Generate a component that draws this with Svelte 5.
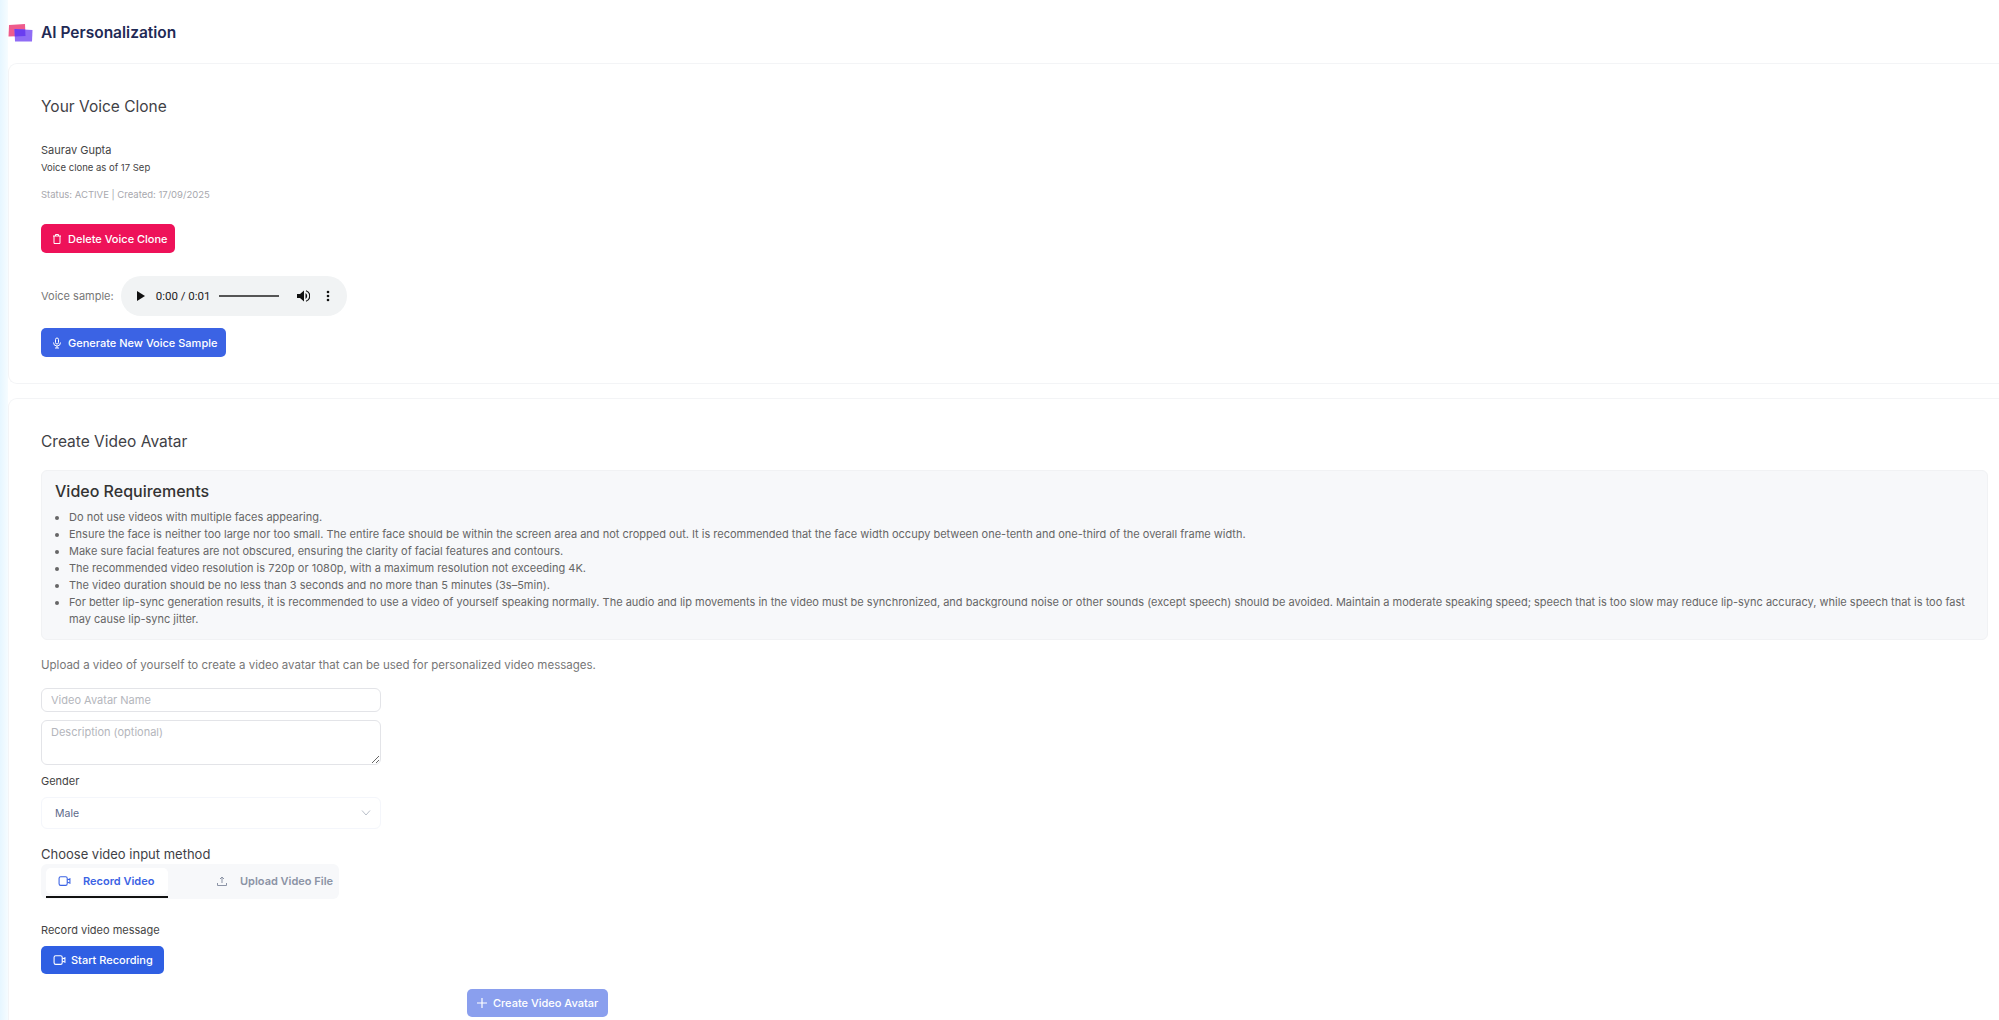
<script>
    const requirements = [
        'Do not use videos with multiple faces appearing.',
        'Ensure the face is neither too large nor too small. The entire face should be within the screen area and not cropped out. It is recommended that the face width occupy between one-tenth and one-third of the overall frame width.',
        'Make sure facial features are not obscured, ensuring the clarity of facial features and contours.',
        'The recommended video resolution is 720p or 1080p, with a maximum resolution not exceeding 4K.',
        'The video duration should be no less than 3 seconds and no more than 5 minutes (3s–5min).',
        'For better lip-sync generation results, it is recommended to use a video of yourself speaking normally. The audio and lip movements in the video must be synchronized, and background noise or other sounds (except speech) should be avoided. Maintain a moderate speaking speed; speech that is too slow may reduce lip-sync accuracy, while speech that is too fast may cause lip-sync jitter.'
    ];
</script>

<div class="page">
    <div class="strip"></div>
    <main>
        <header>
            <svg class="logo" width="26" height="20" viewBox="0 0 26 20">
                <path d="M1 2 L17 1 L17.500 13 L0.500 13.500 Z" fill="#ee5b8c" />
                <path d="M6.500 6 L24.500 7 L24 18.500 L7 18.500 Z" fill="#8f6cf5" />
                <path d="M6.500 6 L17.200 6.500 L17.500 13 L6.800 13.400 Z" fill="#6a3df0" />
            </svg>
            <h1>AI Personalization</h1>
        </header>

        <section class="card first">
            <h2>Your Voice Clone</h2>
            <p class="name">Saurav Gupta</p>
            <p class="as-of">Voice clone as of 17 Sep</p>
            <p class="status">Status: ACTIVE | Created: 17/09/2025</p>
            <button class="btn danger">
                <svg width="12" height="12" viewBox="0 0 24 24" fill="none" stroke="currentColor" stroke-width="2"><path d="M4 6h16M9 6V3h6v3M6 6v15h12V6" /></svg>
                Delete Voice Clone
            </button>
            <div class="sample">
                <span>Voice sample:</span>
                <div class="player">
                    <svg class="play" width="8" height="10" viewBox="0 0 8 10"><path d="M0 0 L8 5 L0 10 Z" fill="#111" /></svg>
                    <span class="time">0:00 / 0:01</span>
                    <div class="track"></div>
                    <svg class="vol" width="13" height="12" viewBox="0 0 13 12"><path d="M0 4 H3 L7 0.500 V11.500 L3 8 H0 Z" fill="#111" /><path d="M8.500 3 A3.500 3.500 0 0 1 8.500 9 Z" fill="#111" /><path d="M9 0.800 A5.500 5.500 0 0 1 9 11.200" fill="none" stroke="#111" stroke-width="1.200" /></svg>
                    <svg class="dots" width="4" height="12" viewBox="0 0 4 12"><circle cx="2" cy="2" r="1.300" fill="#111" /><circle cx="2" cy="6" r="1.300" fill="#111" /><circle cx="2" cy="10" r="1.300" fill="#111" /></svg>
                </div>
            </div>
            <button class="btn primary generate">
                <svg width="12" height="12" viewBox="0 0 24 24" fill="none" stroke="currentColor" stroke-width="2"><rect x="9" y="2" width="6" height="12" rx="3" /><path d="M5 11a7 7 0 0 0 14 0M12 18v4M8 22h8" /></svg>
                Generate New Voice Sample
            </button>
        </section>

        <section class="card second">
            <h2>Create Video Avatar</h2>
            <div class="requirements">
                <h3>Video Requirements</h3>
                <ul>
                    {#each requirements as item}
                        <li>{item}</li>
                    {/each}
                </ul>
            </div>
            <p class="intro">Upload a video of yourself to create a video avatar that can be used for personalized video messages.</p>

            <div class="form">
                <input type="text" placeholder="Video Avatar Name" />
                <textarea placeholder="Description (optional)"></textarea>
                <label for="gender">Gender</label>
                <div id="gender" class="select">
                    <span>Male</span>
                    <svg width="10" height="6" viewBox="0 0 10 6" fill="none" stroke="#b9bfca" stroke-width="1"><path d="M1 0.500 L5 5 L9 0.500" /></svg>
                </div>
            </div>

            <p class="method">Choose video input method</p>
            <div class="tabs">
                <div class="tab active">
                    <svg width="13" height="12" viewBox="0 0 24 22" fill="none" stroke="currentColor" stroke-width="2"><rect x="2" y="3" width="15" height="16" rx="3" /><path d="M17 9l5-2v8l-5-2" /></svg>
                    Record Video
                </div>
                <div class="tab">
                    <svg width="12" height="12" viewBox="0 0 24 24" fill="none" stroke="currentColor" stroke-width="2"><path d="M3 16v5h18v-5M12 16V4M8 8l4-4 4 4" /></svg>
                    Upload Video File
                </div>
            </div>

            <p class="record-label">Record video message</p>
            <button class="btn primary start">
                <svg width="13" height="12" viewBox="0 0 24 22" fill="none" stroke="currentColor" stroke-width="2"><rect x="2" y="3" width="15" height="16" rx="3" /><path d="M17 9l5-2v8l-5-2" /></svg>
                Start Recording
            </button>
            <div class="submit-row">
                <button class="btn create">
                    <svg width="12" height="12" viewBox="0 0 12 12" fill="none" stroke="currentColor" stroke-width="1.200"><path d="M6 1v10M1 6h10" /></svg>
                    Create Video Avatar
                </button>
            </div>
        </section>
    </main>
</div>

<style>
    :global(body) {
        background: #fff;
        overflow: hidden;
    }

    * {
        box-sizing: border-box;
    }

    .page {
        display: flex;
        height: 1020px;
        overflow: hidden;
        font-family: Inter, "Open Sans", sans-serif;
        color: #444;
    }

    .strip {
        width: 8px;
        flex-shrink: 0;
        background: linear-gradient(90deg, #e6f6ff, #f6fcff);
    }

    main {
        flex: 1;
        min-width: 0;
    }

    header {
        display: flex;
        align-items: center;
        height: 63px;
        padding-top: 2px;
    }

    .logo {
        margin-right: 7px;
    }

    h1 {
        margin: 0;
        font-size: 15.5px;
        font-weight: 600;
        color: #1f2a55;
    }

    .card {
        background: #fff;
        border: 1px solid #f3f4f6;
        border-right: 0;
        border-radius: 9px 0 0 9px;
        padding-left: 32px;
    }

    .first {
        height: 321px;
        padding-top: 33px;
    }

    .second {
        height: 640px;
        margin-top: 14px;
        padding-top: 33px;
    }

    h2 {
        margin: 0;
        font-size: 15.500px;
        font-weight: 400;
        line-height: 20px;
        color: #3f3f46;
    }

    p {
        margin: 0;
    }

    .name {
        margin-top: 26px;
        font-size: 11px;
        line-height: 14px;
    }

    .as-of {
        margin-top: 5px;
        font-size: 9.500px;
        line-height: 12px;
    }

    .status {
        margin-top: 15px;
        font-size: 9.500px;
        line-height: 12px;
        color: #a8a8ae;
    }

    .btn {
        display: inline-flex;
        align-items: center;
        gap: 5px;
        height: 29px;
        border: 0;
        border-radius: 5px;
        color: #fff;
        font-family: inherit;
        font-size: 11px;
        font-weight: 500;
        white-space: nowrap;
    }

    .danger {
        display: flex;
        width: 134px;
        margin-top: 23px;
        padding-left: 10px;
        background: #ee1259;
    }

    .sample {
        display: flex;
        align-items: center;
        gap: 7px;
        margin-top: 23px;
        font-size: 11px;
        color: #777;
    }

    .player {
        display: flex;
        align-items: center;
        width: 226px;
        height: 40px;
        padding-left: 16px;
        border-radius: 20px;
        background: #f1f3f4;
    }

    .time {
        margin-left: 11px;
        width: 50px;
        font-family: Roboto, sans-serif;
        font-size: 11.500px;
        color: #222;
        white-space: nowrap;
    }

    .track {
        width: 60px;
        height: 2px;
        margin-left: 13px;
        background: #555;
    }

    .vol {
        margin-left: 18px;
    }

    .dots {
        margin-left: 16px;
    }

    .primary {
        background: #3b63e4;
    }

    .generate {
        display: flex;
        width: 185px;
        margin-top: 12px;
        padding-left: 10px;
    }

    .requirements {
        width: 1947px;
        height: 170px;
        margin-top: 18px;
        padding: 10px 13px;
        border: 1px solid #f1f2f4;
        border-radius: 6px;
        background: #f7f8fa;
    }

    h3 {
        margin: 0;
        font-size: 16px;
        font-weight: 500;
        line-height: 20px;
        color: #333;
    }

    ul {
        margin: 8px 0 0;
        padding-left: 14px;
        font-size: 11px;
        line-height: 17px;
        color: #666;
    }

    .intro {
        margin-top: 17px;
        font-size: 11.500px;
        line-height: 16px;
        color: #777;
    }

    .form {
        display: flex;
        flex-direction: column;
        width: 340px;
        margin-top: 15px;
    }

    input, textarea {
        display: block;
        width: 100%;
        border: 1px solid #e3e4e8;
        border-radius: 6px;
        background: #fff;
        font-family: inherit;
        font-size: 11px;
        color: #444;
    }

    input::placeholder, textarea::placeholder {
        color: #b4b6bc;
    }

    input {
        height: 24px;
        padding: 0 9px;
    }

    textarea {
        height: 45px;
        margin-top: 8px;
        padding: 4px 9px;
    }

    label {
        margin-top: 9px;
        font-size: 11px;
        line-height: 14px;
        color: #444;
    }

    .select {
        display: flex;
        align-items: center;
        justify-content: space-between;
        height: 32px;
        margin-top: 9px;
        padding: 0 9px 0 13px;
        border: 1px solid #f4f6fb;
        border-radius: 6px;
        font-size: 10.500px;
        color: #5d6a8a;
    }

    .method {
        margin-top: 17px;
        font-size: 13px;
        line-height: 16px;
        color: #3f3f46;
    }

    .tabs {
        display: flex;
        width: 298px;
        height: 35px;
        margin-top: 2px;
        padding: 4px 5px 0;
        border-radius: 6px;
        background: #f7f8fa;
    }

    .tab {
        display: flex;
        align-items: center;
        gap: 12px;
        height: 26px;
        padding-left: 12px;
        font-size: 11px;
        font-weight: 600;
        color: #8b93a5;
        white-space: nowrap;
    }

    .tab.active {
        position: relative;
        width: 122px;
        margin-right: 36px;
        border-radius: 5px;
        background: #fff;
        color: #3b63e4;
    }

    .tab.active::after {
        content: '';
        position: absolute;
        left: 0;
        right: 0;
        bottom: -4px;
        height: 2px;
        background: #111;
    }

    .record-label {
        margin-top: 24px;
        font-size: 11px;
        line-height: 14px;
    }

    .start {
        display: flex;
        width: 123px;
        height: 28px;
        margin-top: 9px;
        padding-left: 12px;
        background: #2f5fe3;
    }

    .submit-row {
        margin-top: 15px;
        padding-left: 426px;
    }

    .create {
        width: 141px;
        height: 28px;
        padding-left: 9px;
        background: #8a9fee;
    }
</style>
